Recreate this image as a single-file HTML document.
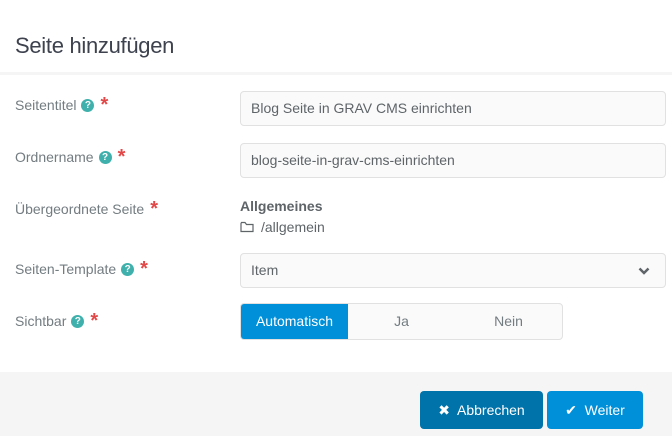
<!DOCTYPE html>
<html><head><style>
*{box-sizing:border-box;margin:0;padding:0}
body{width:672px;height:436px;background:#fff;font-family:"Liberation Sans",Arial,sans-serif;position:relative;overflow:hidden;color:#737c81}
.h{position:absolute;left:15px;top:33px;font-size:22px;color:#3d424e;letter-spacing:-0.3px}
.sep{position:absolute;left:0;top:72px;width:672px;height:3px;background:#f5f5f5}
.lbl{position:absolute;left:15px;font-size:14px;color:#737c81;line-height:20px}
.q{display:inline-block;width:13px;height:13px;border-radius:50%;background:#3fb0ac;color:#fff;font-size:10px;font-weight:bold;text-align:center;line-height:13px;vertical-align:middle;position:relative;top:-1px;margin-left:5px}
.st{color:#e34848;font-size:20px;font-weight:bold;margin-left:6px;position:relative;top:1px}
.inp{position:absolute;left:240px;width:426px;height:35px;border:1px solid #e1e1e1;border-radius:4px;background:#fafafa;font-size:14px;color:#5e6468;padding:0 10px;line-height:33px}
.tg{position:absolute;left:240px;top:303px;width:323px;height:37px;border:1px solid #e1e1e1;border-radius:4px;background:#fafafa;display:flex;overflow:hidden;font-size:14px}
.tg div{text-align:center;line-height:35px;color:#737c81}
.foot{position:absolute;left:0;top:372px;width:672px;height:64px;background:#f5f5f5}
.btn{position:absolute;top:391px;height:38px;border-radius:4px;color:#fff;font-size:14px;line-height:38px;text-align:center}
</style></head><body>
<div class="h">Seite hinzufügen</div>
<div class="sep"></div>
<div class="lbl" style="top:94px">Seitentitel<span class="q">?</span><span class="st">*</span></div>
<div class="inp" style="top:91px">Blog Seite in GRAV CMS einrichten</div>
<div class="lbl" style="top:146px">Ordnername<span class="q">?</span><span class="st">*</span></div>
<div class="inp" style="top:143px">blog-seite-in-grav-cms-einrichten</div>
<div class="lbl" style="top:198px">Übergeordnete Seite<span class="st">*</span></div>
<div style="position:absolute;left:240px;top:198px;font-size:14px;font-weight:bold;color:#5e6468">Allgemeines</div>
<div style="position:absolute;left:240px;top:219px;font-size:14px;color:#5e6468"><svg width="14" height="12" viewBox="0 0 14 12" style="vertical-align:-1px;margin-right:7px"><path d="M1 2.5V10.5H13V3.5H6.5L5 1.5H1.5Z" fill="none" stroke="#5e6468" stroke-width="1.2"/></svg>/allgemein</div>
<div class="lbl" style="top:258px">Seiten-Template<span class="q">?</span><span class="st">*</span></div>
<div class="inp" style="top:253px">Item<svg width="12" height="8" viewBox="0 0 12 8" style="position:absolute;right:15px;top:13px"><path d="M1.5 1.5L6 6L10.5 1.5" fill="none" stroke="#5e6468" stroke-width="2.5"/></svg></div>
<div class="lbl" style="top:310px">Sichtbar<span class="q">?</span><span class="st">*</span></div>
<div class="tg"><div style="width:107px;background:#0090d9;color:#fff">Automatisch</div><div style="width:107px">Ja</div><div style="width:107px">Nein</div></div>
<div class="foot"></div>
<div class="btn" style="left:420px;width:123px;background:#0073aa">✖&nbsp; Abbrechen</div>
<div class="btn" style="left:547px;width:96px;background:#0090d9">✔&nbsp; Weiter</div>
</body></html>
